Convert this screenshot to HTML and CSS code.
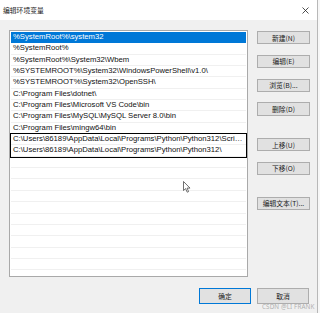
FILE: index.html
```html
<!DOCTYPE html>
<html lang="zh-CN">
<head>
    <meta charset="UTF-8">
    <title>编辑环境变量</title>
    <link rel="stylesheet" href="styles.css">
</head>
<body>
    <div class="window">
        <!-- Title bar -->
        <div class="titlebar">
            <span class="title">编辑环境变量</span>
            <svg class="close" width="7" height="7" viewBox="0 0 7 7">
                <path d="M0.5 0.5 L6.5 6.5 M6.5 0.5 L0.5 6.5" stroke="#222" stroke-width="0.8" fill="none"/>
            </svg>
        </div>

        <div class="content">
            <div class="main">
                <!-- Path list -->
                <div class="list">
                    <div class="row selected">%SystemRoot%\system32</div>
                    <div class="row">%SystemRoot%</div>
                    <div class="row">%SystemRoot%\System32\Wbem</div>
                    <div class="row">%SYSTEMROOT%\System32\WindowsPowerShell\v1.0\</div>
                    <div class="row">%SYSTEMROOT%\System32\OpenSSH\</div>
                    <div class="row">C:\Program Files\dotnet\</div>
                    <div class="row">C:\Program Files\Microsoft VS Code\bin</div>
                    <div class="row">C:\Program Files\MySQL\MySQL Server 8.0\bin</div>
                    <div class="row">C:\Program Files\mingw64\bin</div>
                    <div class="marked">
                        <div class="row">C:\Users\86189\AppData\Local\Programs\Python\Python312\Scripts\</div>
                        <div class="row">C:\Users\86189\AppData\Local\Programs\Python\Python312\</div>
                    </div>
                    <div class="row"></div>
                    <div class="row"></div>
                    <div class="row"></div>
                    <div class="row"></div>
                    <div class="row"></div>
                    <div class="row"></div>
                    <div class="row"></div>
                    <div class="row"></div>
                    <div class="row"></div>
                    <div class="row"></div>
                    <div class="row"></div>

                    <svg class="pointer" width="8" height="12" viewBox="0 0 8 12">
                        <path d="M0.5 0.5 L0.5 9.5 L2.6 7.6 L4.2 11.2 L5.6 10.6 L4.1 7.1 L7 7.1 Z" fill="#fff" stroke="#333" stroke-width="0.7"/>
                    </svg>
                </div>

                <!-- Side buttons -->
                <div class="side">
                    <div class="group">
                        <button class="btn">新建(N)</button>
                        <button class="btn">编辑(E)</button>
                        <button class="btn">浏览(B)...</button>
                        <button class="btn">删除(D)</button>
                    </div>
                    <div class="group move">
                        <button class="btn">上移(U)</button>
                        <button class="btn">下移(O)</button>
                    </div>
                    <button class="btn edit-text">编辑文本(T)...</button>
                </div>
            </div>

            <div class="footer">
                <button class="btn big focused">确定</button>
                <button class="btn big">取消</button>
            </div>
        </div>

        <span class="watermark">CSDN @LI FRANK</span>
    </div>
</body>
</html>
```

FILE: styles.css
```css
body {
    margin: 0;
    background-color: #f7f7f7;
    font-family: "Liberation Sans", "Noto Sans CJK SC", sans-serif;
}

.window {
    position: relative;
    width: 318px;
    height: 313px;
    background-color: #f0f0f0;
    border-right: 1px solid #b8b8b8;
    box-sizing: border-box;
    overflow: hidden;
}

.titlebar {
    height: 20px;
    background-color: #ffffff;
    display: flex;
    align-items: center;
    justify-content: space-between;
    padding: 0 8px 0 3px;
}

.title {
    font-family: "Noto Sans CJK SC", sans-serif;
    font-size: 6.8px;
    color: #222;
}

.content {
    padding: 10px 0 0 9px;
}

.main {
    display: flex;
    gap: 9px;
}

.list {
    position: relative;
    width: 239px;
    height: 247px;
    box-sizing: border-box;
    background-color: #ffffff;
    border: 1px solid #a9a9a9;
    padding: 1px 1px;
    overflow: hidden;
}

.row {
    height: 11.35px;
    box-sizing: border-box;
    border-bottom: 1px solid #f0f0f0;
    padding-left: 2px;
    font-size: 7.7px;
    line-height: 10.5px;
    color: #111;
    white-space: nowrap;
    overflow: hidden;
    text-overflow: ellipsis;
}

.row.selected {
    background-color: #0078d7;
    color: #ffffff;
    border-bottom-color: #0078d7;
}

.marked {
    outline: 1.5px solid #000000;
    outline-offset: 0.5px;
}

.pointer {
    position: absolute;
    left: 173px;
    top: 150px;
}

.side {
    width: 53px;
    padding-top: 1px;
    display: flex;
    flex-direction: column;
}

.group {
    display: flex;
    flex-direction: column;
    gap: 10.5px;
}

.group.move {
    margin-top: 22.3px;
}

.btn {
    height: 13.3px;
    padding: 0;
    background-color: #e1e1e1;
    border: 1px solid #adadad;
    font-family: "Noto Sans CJK SC", sans-serif;
    font-size: 6.8px;
    color: #222;
    text-align: center;
    line-height: 10px;
}

.edit-text {
    margin-top: 21.7px;
}

.footer {
    display: flex;
    justify-content: flex-end;
    gap: 6px;
    padding: 11px 8px 0 0;
}

.btn.big {
    width: 52px;
    height: 16px;
}

.btn.focused {
    border: 1.5px solid #0078d7;
}

.watermark {
    position: absolute;
    left: 262px;
    top: 302px;
    font-family: "Noto Sans", sans-serif;
    font-size: 6.3px;
    color: #b0b0b0;
    letter-spacing: 0.1px;
}
```
